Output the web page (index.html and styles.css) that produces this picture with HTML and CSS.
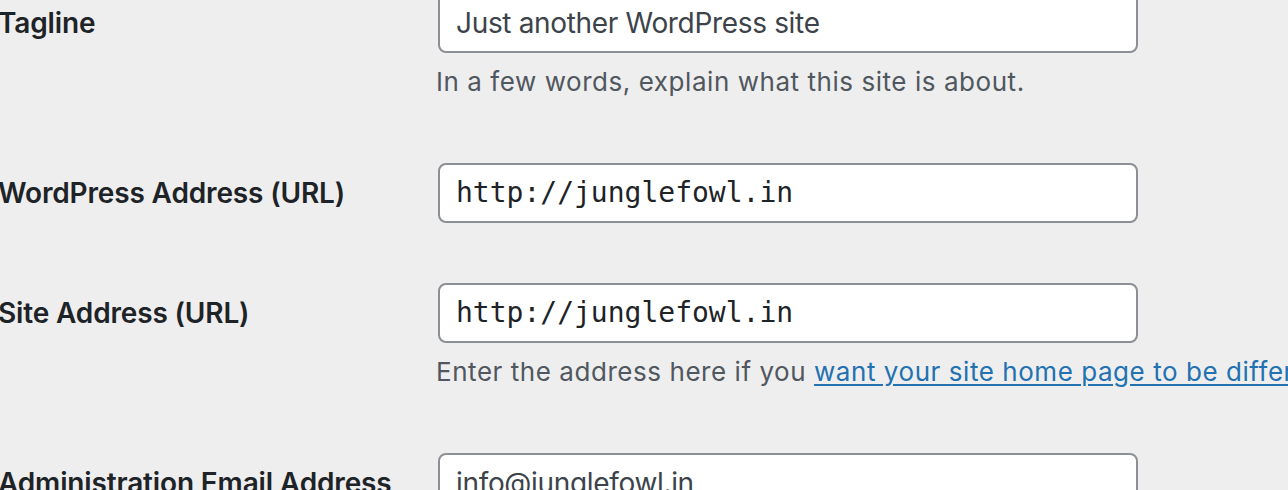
FILE: index.html
```html
<!DOCTYPE html>
<html lang="en">
<head>
<meta charset="utf-8">
<title>General Settings</title>
<link rel="stylesheet" href="styles.css">
</head>
<body>
<div class="form-table">
  <div class="row">
    <div class="th"><label>Tagline</label></div>
    <div class="td">
      <div class="input regular">Just another WordPress site</div>
      <p class="description">In a few words, explain what this site is about.</p>
    </div>
  </div>
  <div class="row">
    <div class="th"><label>WordPress Address (URL)</label></div>
    <div class="td">
      <div class="input code">http://junglefowl.in</div>
    </div>
  </div>
  <div class="row">
    <div class="th"><label>Site Address (URL)</label></div>
    <div class="td">
      <div class="input code">http://junglefowl.in</div>
      <p class="description">Enter the address here if you <a href="#">want your site home page to be different from your WordPress installation directory</a>.</p>
    </div>
  </div>
  <div class="row">
    <div class="th"><label>Administration Email Address</label></div>
    <div class="td">
      <div class="input regular">info@junglefowl.in</div>
    </div>
  </div>
</div>
</body>
</html>
```
FILE: styles.css
```css
html, body {
  margin: 0;
  padding: 0;
  background: #eeeeee;
  overflow: hidden;
}
body {
  font-family: Inter, "Noto Sans", sans-serif;
  color: #1d2327;
}
.form-table {
  margin-top: -37px;
  margin-left: -2px;
  display: flex;
  flex-direction: column;
}
.row {
  display: grid;
  grid-template-columns: 420px 1fr;
}
.th {
  padding: 40px 20px 40px 0;
  font-size: 28px;
  font-weight: 600;
  line-height: 40px;
  letter-spacing: -0.15px;
  white-space: nowrap;
}
.td {
  padding: 30px 20px;
  min-width: 0;
}
.input {
  box-sizing: border-box;
  width: 700px;
  height: 60px;
  background: #fff;
  border: 2px solid #8c8f94;
  border-radius: 8px;
  padding: 0 16px;
  line-height: 56px;
  font-size: 28px;
  letter-spacing: -0.33px;
  color: #3c434a;
  white-space: nowrap;
  overflow: hidden;
}
.input.code {
  font-family: "DejaVu Sans Mono", "Liberation Mono", monospace;
  letter-spacing: 0;
  color: #1d2327;
}
.description {
  margin: 8px 0 0 -2px;
  font-size: 26px;
  line-height: 42px;
  letter-spacing: 0.55px;
  color: #50575e;
  white-space: nowrap;
}
.description a {
  color: #2271b1;
  text-decoration: underline;
  text-underline-offset: 3px;
}
```
